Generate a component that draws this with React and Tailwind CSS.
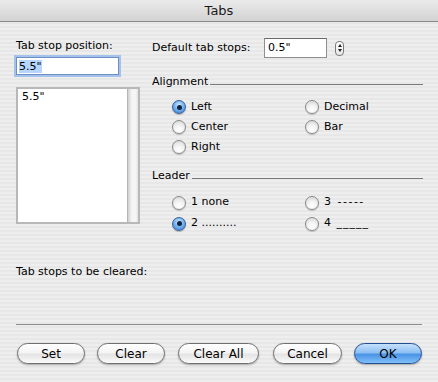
const font = { fontFamily: '"DejaVu Sans", "Lucida Grande", sans-serif' };

function Radio({ checked, label, labelClass }) {
    return (
        <div className="flex items-center h-full">
            {checked ? (
                <span className="w-[14px] h-[14px] rounded-full border border-[#3a5f99] bg-[radial-gradient(circle_at_50%_35%,#d6ecff_0%,#79b4ef_45%,#2f78d6_100%)] flex items-center justify-center shadow-[0_1px_1px_rgba(0,0,0,0.25)]">
                    <span className="w-[5px] h-[5px] rounded-full bg-[#10233f]"></span>
                </span>
            ) : (
                <span className="w-[14px] h-[14px] rounded-full border border-[#8a8a8a] bg-[radial-gradient(circle_at_50%_75%,#ffffff_0%,#f2f2f2_45%,#cfcfcf_100%)] shadow-[0_1px_1px_rgba(0,0,0,0.2)]"></span>
            )}
            <span className={"ml-[5px] text-[11px] text-black " + (labelClass || "")}>{label}</span>
        </div>
    );
}

function Button({ label, width, primary, className }) {
    const base = "h-[21px] rounded-full flex items-center justify-center text-[12px] shadow-[0_1px_2px_rgba(0,0,0,0.3)] " + width + " " + className;
    if (primary) {
        return (
            <div className={base + " border border-[#244f8f] bg-[linear-gradient(180deg,#c6e1fb_0%,#8ec0f3_45%,#4b94e6_55%,#7fc0f8_100%)] text-black"}>
                {label}
            </div>
        );
    }
    return (
        <div className={base + " border border-[#6f6f6f] bg-[linear-gradient(180deg,#ffffff_0%,#f4f4f4_45%,#e4e4e4_55%,#fbfbfb_100%)] text-black"}>
            {label}
        </div>
    );
}

export default function App() {
    return (
        <div
            className="w-[438px] h-[382px] overflow-hidden bg-[repeating-linear-gradient(180deg,#eeeeee_0px,#eeeeee_2px,#e7e7e7_2px,#e7e7e7_4px)] text-black"
            style={font}
        >
            {/* title bar */}
            <div className="h-[22px] border-b border-[#8a8a8a] bg-[linear-gradient(180deg,#ebebeb_0%,#d2d2d2_100%)] flex items-center justify-center">
                <span className="text-[13px] text-[#1a1a1a]">Tabs</span>
            </div>

            <div className="flex items-start">
                {/* left column */}
                <div className="ml-[16px] w-[124px]">
                    <div className="mt-[17px] h-[14px] leading-[14px] text-[11px]">Tab stop position:</div>
                    <div className="mt-[4px] w-[103px] h-[18px] bg-white border border-[#6d8fc4] shadow-[0_0_0_2px_#a4c2ec] flex items-center px-[2px]">
                        <span className="text-[11px] bg-[#b5d5ff] leading-[13px]">5.5"</span>
                    </div>
                    <div className="mt-[12px] w-[124px] h-[137px] border-2 border-[#b8b8b8] bg-white flex">
                        <div className="flex-1 pl-[4px] pt-[1px] text-[11px] leading-[14px]">5.5"</div>
                        <div className="w-[11px] h-full border-l border-[#b5b5b5] bg-[linear-gradient(90deg,#cfcfcf_0%,#f3f3f3_35%,#f7f7f7_70%,#e4e4e4_100%)]"></div>
                    </div>
                </div>

                {/* right column */}
                <div className="ml-[12px] w-[271px]">
                    <div className="mt-[16px] h-[20px] flex items-center">
                        <span className="w-[112px] text-[11px]">Default tab stops:</span>
                        <div className="w-[63px] h-[20px] bg-white border border-[#8e8e8e] border-t-[#6a6a6a] flex items-center px-[3px] text-[11px]">0.5"</div>
                        <div className="ml-[8px] w-[9px] h-[15px] rounded-[4px] border border-[#7a7a7a] bg-[linear-gradient(180deg,#ffffff_0%,#e6e6e6_100%)] flex flex-col items-center justify-center gap-[2px]">
                            <span className="w-0 h-0 border-l-[2px] border-r-[2px] border-b-[3px] border-l-transparent border-r-transparent border-b-[#222]"></span>
                            <span className="w-0 h-0 border-l-[2px] border-r-[2px] border-t-[3px] border-l-transparent border-r-transparent border-t-[#222]"></span>
                        </div>
                    </div>

                    <div className="mt-[17px] h-[14px] flex items-center">
                        <span className="text-[11px]">Alignment</span>
                        <div className="ml-[2px] mt-[5px] flex-1 h-px bg-[#7a7a7a]"></div>
                    </div>
                    <div className="mt-[8px] ml-[20px] grid grid-cols-[133px_1fr] auto-rows-[20px]">
                        <Radio checked label="Left" />
                        <Radio label="Decimal" />
                        <Radio label="Center" />
                        <Radio label="Bar" />
                        <Radio label="Right" />
                    </div>

                    <div className="mt-[12px] h-[14px] flex items-center">
                        <span className="text-[11px]">Leader</span>
                        <div className="ml-[2px] mt-[5px] flex-1 h-px bg-[#7a7a7a]"></div>
                    </div>
                    <div className="mt-[9px] ml-[20px] grid grid-cols-[133px_1fr] auto-rows-[21px]">
                        <Radio label="1 none" />
                        <Radio label="3 -----" labelClass="tracking-[1.5px]" />
                        <Radio checked label="2 .........." />
                        <Radio label="4 _____" labelClass="tracking-[1px]" />
                    </div>
                </div>
            </div>

            <div className="ml-[16px] mt-[31px] h-[14px] leading-[14px] text-[11px]">Tab stops to be cleared:</div>
            <div className="mx-[16px] mt-[45px] h-px bg-[#8c8c8c]"></div>

            <div className="mt-[18px] flex items-center">
                <Button label="Set" width="w-[68px]" className="ml-[17px]" />
                <Button label="Clear" width="w-[68px]" className="ml-[12px]" />
                <Button label="Clear All" width="w-[81px]" className="ml-[13px]" />
                <Button label="Cancel" width="w-[69px]" className="ml-[14px]" />
                <Button label="OK" width="w-[68px]" primary className="ml-[12px]" />
            </div>
        </div>
    );
}
